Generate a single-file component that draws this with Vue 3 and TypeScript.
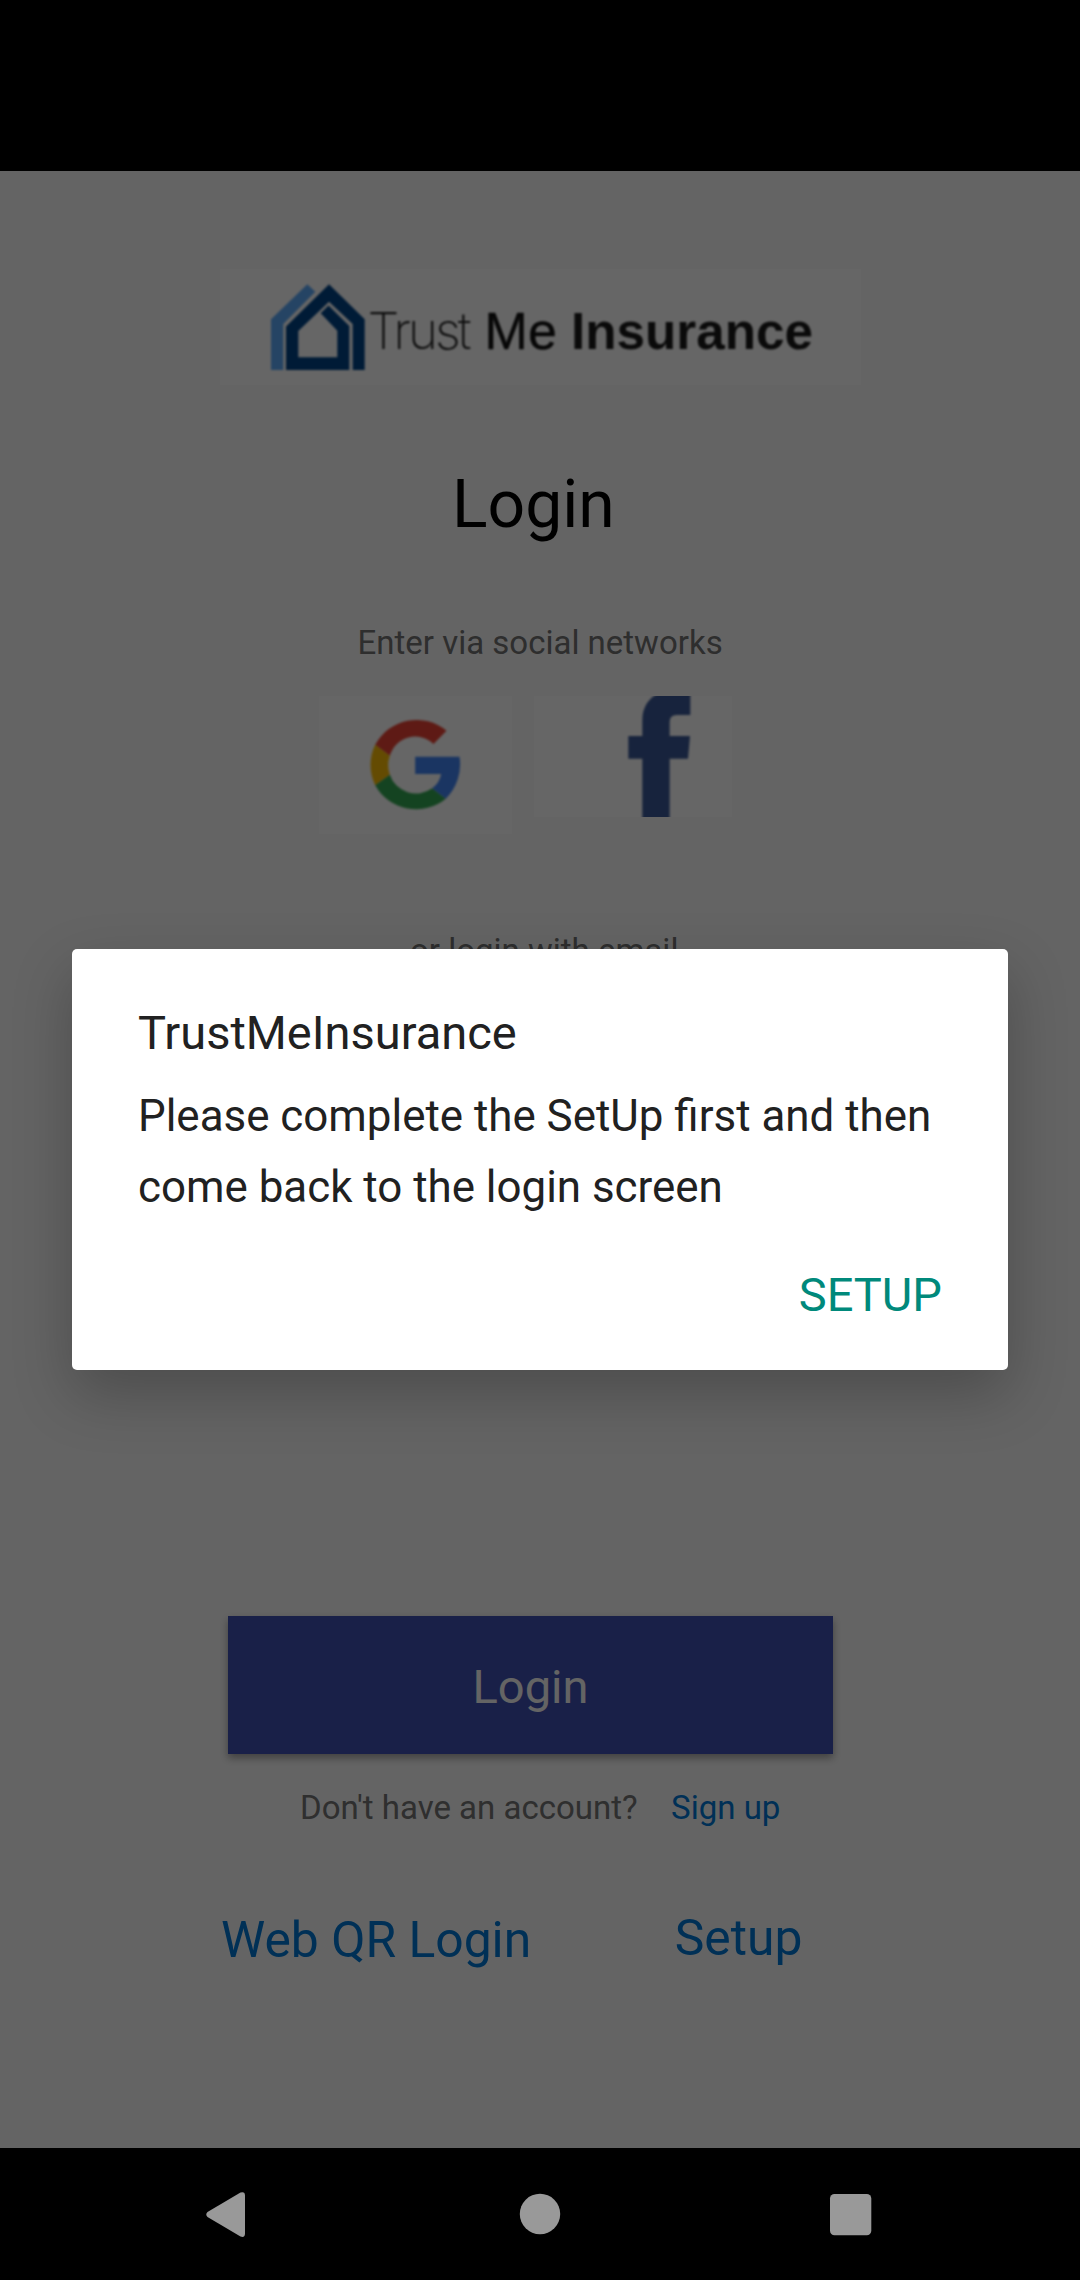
<script setup lang="ts">
import { ref } from 'vue'

const dialogOpen = ref<boolean>(true)
const message: string = 'Please complete the SetUp first and then come back to the login screen'
</script>

<template>
  <div class="device">
    <div class="status-bar"></div>

    <main class="screen">
      <div class="brand">
        <svg width="641" height="116" viewBox="220 269 641 116">
          <g class="soft">
            <path fill="#5daafa" d="M271 319.300L307.300 284.300L315.300 291.700L283.300 324V370H271Z" />
            <path
              fill="#004488"
              d="M286 370V326.500L329 284.300L364.700 319.300V370H352.700V324L329 301.700L298.300 331V357.300H337.300V330.700L320.700 313.300L328.500 305.500L349.300 326V370Z"
            />
            <text x="367.500" y="348.500" class="thin" textLength="104">Trust</text>
            <text x="484.500" y="348.500" class="mid" textLength="72.500">Me</text>
            <text x="571" y="348.500" class="heavy" textLength="242" lengthAdjust="spacingAndGlyphs">Insurance</text>
          </g>
        </svg>
      </div>

      <h1 class="title">Login</h1>
      <p class="hint social-hint">Enter via social networks</p>

      <div class="socials">
        <button class="social google" aria-label="Google">
          <svg width="193" height="138" viewBox="58.500 79 579 414">
            <g class="soft-lg">
              <path fill="#ea4335" d="M227 225A141 141 0 0 1 441 183L402 223A80 82 0 0 0 271 258Z" />
              <path fill="#fbbc05" d="M227 225L271 258A84 84 0 0 0 271 315L227 347A141 141 0 0 1 227 225Z" />
              <path fill="#34a853" d="M227 347L271 315A83 83 0 0 0 398 356L439 387A141 141 0 0 1 227 347Z" />
              <path fill="#4285f4" d="M347 261H480A145 145 0 0 1 439 387L398 356A68 68 0 0 0 425 313H347Z" />
            </g>
          </svg>
        </button>
        <button class="social facebook" aria-label="Facebook">
          <svg width="198" height="121" viewBox="702 78 594 363">
            <path
              class="soft-lg"
              fill="#3b5998"
              d="M1027 450V266H985V198H1027V150C1027 112 1046 84 1076 70H1171V135H1130Q1109 135 1109 156V198H1170L1164 266H1109V450Z"
            />
          </svg>
        </button>
      </div>

      <p class="hint email-hint">or login with email</p>

      <button class="login">Login</button>

      <div class="account">
        <span class="question">Don't have an account?</span>
        <a class="signup">Sign up</a>
      </div>

      <div class="links">
        <a class="qr">Web QR Login</a>
        <a class="setup">Setup</a>
      </div>

      <div v-if="dialogOpen" class="scrim">
        <section class="dialog" role="dialog">
          <h2 class="dialog-title">TrustMeInsurance</h2>
          <p class="dialog-text">{{ message }}</p>
          <button class="dialog-action" @click="dialogOpen = false">SETUP</button>
        </section>
      </div>
    </main>

    <nav class="nav-bar">
      <svg width="1080" height="132" viewBox="0 2148 1080 132" fill="#999">
        <path d="M207.500 2212Q205 2214.500 207.500 2217L240.500 2236.500Q245 2238 245 2233.500V2195.500Q245 2191 240.500 2192.500Z" />
        <circle cx="540" cy="2214" r="20.200" />
        <rect x="830" y="2194" width="41.300" height="41.300" rx="4.500" />
      </svg>
    </nav>
  </div>
</template>

<style>
body {
  background: #000;
}
</style>

<style scoped>
.device {
  width: 1080px;
  height: 2280px;
  display: flex;
  flex-direction: column;
  overflow: hidden;
  background: #000;
  font-family: Roboto, sans-serif;
}
.status-bar {
  height: 171px;
  flex: none;
}
.screen {
  position: relative;
  height: 1977px;
  flex: none;
  background: #fafafa;
  display: flex;
  flex-direction: column;
}
.nav-bar {
  height: 132px;
  flex: none;
}
svg {
  display: block;
}
button {
  border: 0;
  padding: 0;
  margin: 0;
  font-family: inherit;
}
h1,
h2,
p {
  margin: 0;
  font-weight: 400;
}
.brand {
  width: 641px;
  height: 116px;
  margin: 98px 0 0 220px;
  background: #fff;
}
.soft {
  filter: blur(0.8px);
}
.soft-lg {
  filter: blur(2.5px);
}
.thin {
  font: 200 51px Inter, sans-serif;
  fill: #222;
}
.mid {
  font: 400 52px "Liberation Sans", sans-serif;
  fill: #111;
  stroke: #111;
  stroke-width: 0.4px;
}
.heavy {
  font: 700 52px "Liberation Sans", sans-serif;
  fill: #1a1a1a;
}
.title {
  margin: 81px 0 0 452px;
  font-size: 66px;
  line-height: 78px;
  color: #000;
}
.hint {
  font-size: 33px;
  line-height: 40px;
  color: #737373;
  white-space: nowrap;
}
.social-hint {
  margin: 79px 0 0 357.5px;
}
.socials {
  margin: 33px 0 0 319px;
  display: flex;
  align-items: flex-start;
  gap: 22px;
  height: 138px;
}
.social {
  background: #fff;
}
.email-hint {
  margin: 97px 0 0 410px;
}
.login {
  margin: 645px 0 0 228px;
  width: 605px;
  height: 138px;
  flex: none;
  padding-top: 2px;
  background: #3f51b5;
  color: #fafafa;
  font-size: 47px;
  box-shadow: 0 4px 8px rgba(0, 0, 0, 0.36);
}
.account {
  margin: 34px 0 0 300px;
  display: flex;
  gap: 33.5px;
  font-size: 33px;
  line-height: 40px;
  color: #757575;
}
.signup,
.links {
  color: #0078d7;
}
.links {
  margin: 80px 0 0 221px;
  display: flex;
  align-items: flex-start;
  gap: 143.5px;
  font-size: 49.8px;
  line-height: 60px;
}
.qr {
  margin-top: 2px;
}
.scrim {
  position: absolute;
  inset: 0;
  background: rgba(0, 0, 0, 0.6);
  display: flex;
  justify-content: center;
  align-items: flex-start;
}
.dialog {
  width: 936px;
  height: 421px;
  margin-top: 778px;
  box-sizing: border-box;
  padding: 55px 66px 0;
  border-radius: 5px;
  background: #fff;
  box-shadow: 0 24px 60px rgba(0, 0, 0, 0.24);
  display: flex;
  flex-direction: column;
}
.dialog-title {
  font-size: 47px;
  line-height: 58px;
  color: #212121;
}
.dialog-text {
  margin-top: 19px;
  font-size: 43.9px;
  line-height: 71px;
  color: #212121;
}
.dialog-action {
  align-self: flex-end;
  margin-top: 43px;
  background: none;
  color: #00897b;
  font-size: 47px;
  line-height: 58px;
}
</style>
